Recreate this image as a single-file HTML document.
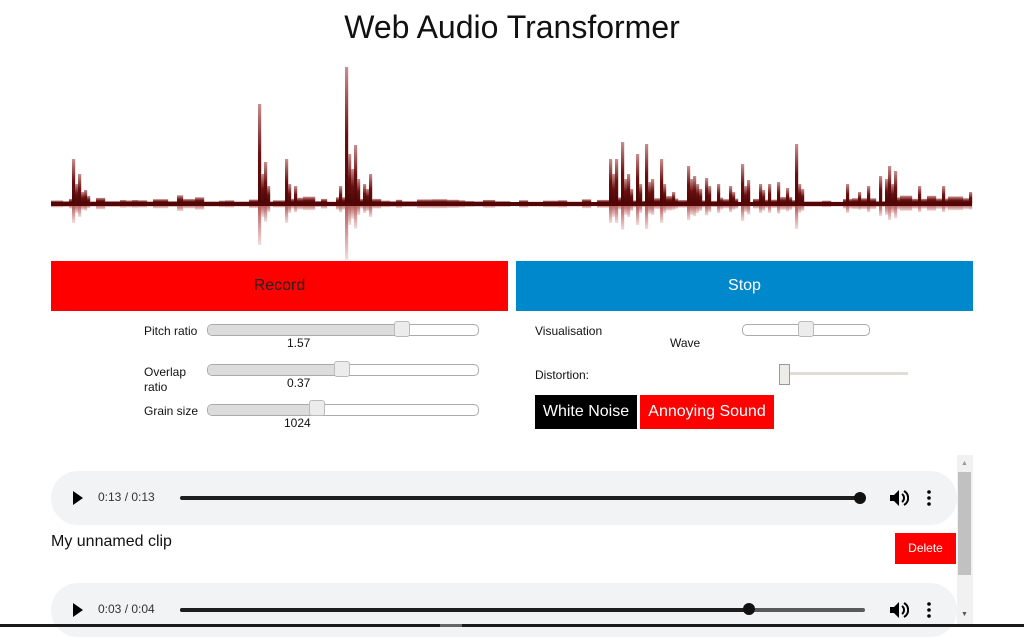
<!DOCTYPE html>
<html><head><meta charset="utf-8"><style>
body{margin:0;width:1024px;height:627px;overflow:hidden;background:#fff;font-family:"Liberation Sans",Arial,sans-serif;position:relative}
h1{position:absolute;top:9px;left:0;width:1024px;text-align:center;margin:0;font-weight:normal;font-size:32px;color:#111}
.abs{position:absolute}
.btn{position:absolute;color:#fff;text-align:center;font-size:16px}
.lbl{position:absolute;font-size:12px;color:#111}
.rng{position:absolute;height:10px;border:1px solid #aaa;border-radius:5px;background:#fff;overflow:hidden}
.rng i{position:absolute;left:0;top:0;bottom:0;background:#dcdcdc}
.th{position:absolute;width:14px;height:14px;background:#ececec;border:1px solid #bbb;border-radius:3px}
.player{position:absolute;left:51px;width:906px;height:54px;background:#f1f3f4;border-radius:27px}
.player .t{position:absolute;left:47px;top:19px;font-size:12px;color:#333}
.bar{position:absolute;left:129px;top:25px;height:4px;background:#1e1e1e;border-radius:2px}
</style></head><body>
<h1>Web Audio Transformer</h1>
<svg class="abs" style="left:0;top:0" width="1024" height="260" id="wv">
<defs>
<linearGradient id="gu" x1="0" y1="1" x2="0" y2="0"><stop offset="0" stop-color="#4a0505"/><stop offset="0.5" stop-color="#6a1010"/><stop offset="1" stop-color="#c89090"/></linearGradient>
<linearGradient id="gd" x1="0" y1="0" x2="0" y2="1"><stop offset="0" stop-color="#b05858"/><stop offset="1" stop-color="#f4dcdc"/></linearGradient>
</defs><g id="g"></g></svg>
<div class="btn" style="left:51px;top:261px;width:457px;height:50px;line-height:50px;background:#ff0000;color:#222">Record</div>
<div class="btn" style="left:516px;top:261px;width:457px;height:50px;line-height:50px;background:#0088cc">Stop</div>

<div class="lbl" style="left:144px;top:324px">Pitch ratio</div>
<div class="rng" style="left:207px;top:324px;width:270px"><i style="width:195px"></i></div><div class="th" style="left:394px;top:321px"></div>
<div class="lbl" style="left:287px;top:336px">1.57</div>
<div class="lbl" style="left:144px;top:365px;line-height:15px">Overlap<br>ratio</div>
<div class="rng" style="left:207px;top:364px;width:270px"><i style="width:135px"></i></div><div class="th" style="left:334px;top:361px"></div>
<div class="lbl" style="left:287px;top:376px">0.37</div>
<div class="lbl" style="left:144px;top:404px">Grain size</div>
<div class="rng" style="left:207px;top:404px;width:270px"><i style="width:110px"></i></div><div class="th" style="left:309px;top:400px"></div>
<div class="lbl" style="left:284px;top:416px">1024</div>

<div class="lbl" style="left:535px;top:324px">Visualisation</div>
<div class="rng" style="left:742px;top:324px;width:126px"></div><div class="th" style="left:798px;top:321px"></div>
<div class="lbl" style="left:670px;top:336px">Wave</div>
<div class="lbl" style="left:535px;top:368px">Distortion:</div>
<div class="abs" style="left:784px;top:372px;width:124px;height:3px;background:#e0ddd8"></div>
<div class="abs" style="left:779px;top:364px;width:9px;height:19px;background:#eeece8;border:1px solid #999"></div>
<div class="btn" style="left:535px;top:395px;width:102px;height:34px;line-height:33px;background:#000">White Noise</div>
<div class="btn" style="left:640px;top:395px;width:134px;height:34px;line-height:33px;background:#ff0000">Annoying Sound</div>

<div class="player" style="top:471px">
<svg class="abs" style="left:21px;top:20px" width="12" height="14"><path d="M1 0L11 7L1 14Z" fill="#000"/></svg>
<div class="t">0:13 / 0:13</div>
<div class="bar" style="width:680px"></div><div class="abs" style="left:803px;top:21px;width:12px;height:12px;border-radius:6px;background:#111"></div>
<svg class="abs" style="left:838px;top:18px" width="20" height="18"><path d="M1 6h4l5-5v16l-5-5H1Z" fill="#000"/><path d="M13 5a5 5 0 0 1 0 8" stroke="#000" stroke-width="2" fill="none"/><path d="M15 2a8 8 0 0 1 0 14" stroke="#000" stroke-width="2" fill="none"/></svg>
<svg class="abs" style="left:876px;top:19px" width="4" height="16"><circle cx="2" cy="2" r="1.8"/><circle cx="2" cy="8" r="1.8"/><circle cx="2" cy="14" r="1.8"/></svg>
</div>
<div class="abs" style="left:51px;top:533px;font-size:16px;color:#111">My unnamed clip</div>
<div class="btn" style="left:895px;top:533px;width:61px;height:31px;line-height:31px;background:#ff0000;font-size:12px">Delete</div>
<div class="player" style="top:583px">
<svg class="abs" style="left:21px;top:20px" width="12" height="14"><path d="M1 0L11 7L1 14Z" fill="#000"/></svg>
<div class="t">0:03 / 0:04</div>
<div class="bar" style="width:685px;background:#5a5a5a"></div><div class="bar" style="width:570px"></div><div class="abs" style="left:692px;top:20px;width:12px;height:12px;border-radius:6px;background:#111"></div>
<svg class="abs" style="left:838px;top:18px" width="20" height="18"><path d="M1 6h4l5-5v16l-5-5H1Z" fill="#000"/><path d="M13 5a5 5 0 0 1 0 8" stroke="#000" stroke-width="2" fill="none"/><path d="M15 2a8 8 0 0 1 0 14" stroke="#000" stroke-width="2" fill="none"/></svg>
<svg class="abs" style="left:876px;top:19px" width="4" height="16"><circle cx="2" cy="2" r="1.8"/><circle cx="2" cy="8" r="1.8"/><circle cx="2" cy="14" r="1.8"/></svg>
</div>
<div class="abs" style="left:957px;top:455px;width:16px;height:170px;background:#f1f1f1"></div>
<div class="abs" style="left:958px;top:472px;width:13px;height:103px;background:#c1c1c1"></div>
<div class="abs" style="left:961px;top:460px;font-size:7px;color:#999">▲</div>
<div class="abs" style="left:961px;top:611px;font-size:7px;color:#555">▼</div>
<div class="abs" style="left:0;top:624px;width:1024px;height:3px;background:#1a1a1a"></div>
<div class="abs" style="left:440px;top:624px;width:22px;height:3px;background:#666"></div>
<script>
var peaks={73:45,76:20,79:30,82:12,85:14,88:8,258:100,261:30,262:58,265:42,268:18,286:45,289:20,293:18,339:18,344:137,347:50,350:35,353:59,356:25,362:20,365:15,370:30,608:45,611:30,615:45,620:62,623:25,626:30,629:15,635:50,638:20,645:60,648:22,652:25,661:45,664:20,672:12,686:38,689:25,692:28,696:20,699:15,706:26,709:18,718:20,729:18,732:12,740:40,743:18,747:24,760:20,763:14,768:20,778:22,787:16,796:60,799:20,802:15,845:20,857:12,867:18,880:28,884:25,887:38,890:20,893:33,919:18,942:18,968:12};
var s=7;function r(){s=(s*9301+49297)%233280;return s/233280;}
var out='';var base=204;var cur=3,left=0;
for(var x=51;x<972;x+=3){
 var h=peaks[x]||peaks[x-1]||peaks[x+1]||0;
 var loud=(x>600&&x<972)||(x>240&&x<380)||(x>60&&x<100)||(x>160&&x<200);
 if(left<=0){cur=2+r()*(loud?7:3);left=2+Math.floor(r()*4);}
 left--;
 var n=h?h:cur;
 out+='<rect x="'+x+'" y="'+(base-n)+'" width="3.2" height="'+n+'" fill="url(#gu)"/>';
 var d=h?n*0.4:n*0.7;
 out+='<rect x="'+x+'" y="'+(base+1)+'" width="3.2" height="'+d+'" fill="url(#gd)"/>';
}
out+='<rect x="51" y="'+(base-2)+'" width="921" height="4" fill="#520606"/>';
document.getElementById('g').innerHTML=out;
</script>
</body></html>
